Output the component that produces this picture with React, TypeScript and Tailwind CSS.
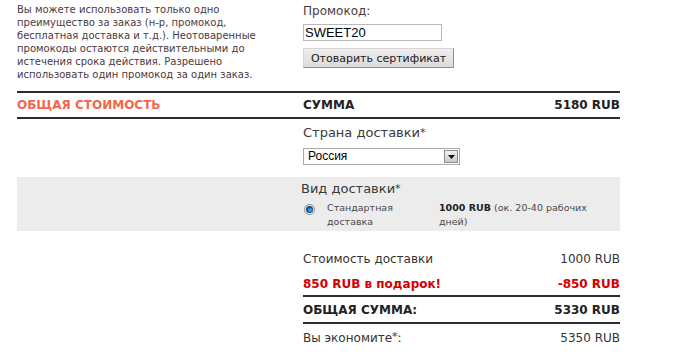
import React from "react";

const VERDANA = "font-['DejaVu_Sans',Verdana,sans-serif]";
const ARIAL = "font-['Liberation_Sans',Arial,sans-serif]";

function PromoBlock() {
  return (
    <div className="flex h-[91px]">
      <p className={`w-[286px] pt-[3px] pr-[30px] text-[10px] leading-[13px] text-[#4b3a3e] ${VERDANA}`}>
        Вы можете использовать только одно преимущество за заказ (н-р, промокод, бесплатная доставка и т.д.). Неотоваренные промокоды остаются действительными до истечения срока действия. Разрешено использовать один промокод за один заказ.
      </p>
      <div className="flex flex-col">
        <label className={`mt-[4px] text-[12px] leading-[15px] text-[#4b3a3e] ${VERDANA}`}>Промокод:</label>
        <input
          defaultValue="SWEET20"
          className={`mt-[5px] h-[17px] w-[139px] border border-[#b9b9b9] bg-white px-[1px] text-[13px] leading-[15px] text-black outline-none ${ARIAL}`}
        />
        <button
          className={`mt-[7px] h-[20px] w-[151px] border border-[#d6d4d4] border-b-[#8e8e8e] border-r-[#8e8e8e] bg-gradient-to-b from-[#efeded] to-[#dcdada] pt-[1px] text-[11px] leading-[16px] text-[#1a1a1a] ${VERDANA}`}
        >
          Отоварить сертификат
        </button>
      </div>
    </div>
  );
}

function SubtotalRow() {
  return (
    <div className={`flex h-[28px] items-center border-y-2 border-[#2c2c2c] text-[12px] font-bold ${VERDANA}`}>
      <span className="w-[286px] text-[#f2674e]">ОБЩАЯ СТОИМОСТЬ</span>
      <span className="flex-1 text-[#222]">СУММА</span>
      <span className="text-[#222]">5180 RUB</span>
    </div>
  );
}

function CountryBlock() {
  return (
    <div className="flex h-[58px]">
      <div className="w-[286px]" />
      <div className="flex flex-col">
        <span className={`mt-[6px] text-[13px] leading-[16px] text-[#3a3a3a] ${VERDANA}`}>
          Страна доставки<span className="text-[11px] align-top">*</span>
        </span>
        <div className="mt-[7px] flex h-[17px] w-[157px] items-center border border-[#a9a9a9] bg-white">
          <span className={`flex-1 pl-[4px] text-[12px] leading-[15px] text-black ${ARIAL}`}>Россия</span>
          <span className="mr-[1px] flex h-[13px] w-[14px] items-center justify-center border border-[#8c8c8c] bg-gradient-to-b from-[#f2f2f2] to-[#c9c9c9]">
            <svg width="7" height="4" viewBox="0 0 7 4">
              <path d="M0 0h7L3.5 4z" fill="#111" />
            </svg>
          </span>
        </div>
      </div>
    </div>
  );
}

function DeliveryBlock() {
  return (
    <div className={`flex h-[54px] bg-[#ececec] ${VERDANA}`}>
      <div className="w-[284px]" />
      <div className="flex flex-col">
        <span className="mt-[4px] text-[13px] leading-[16px] text-[#3a3a3a]">
          Вид доставки<span className="text-[11px] align-top">*</span>
        </span>
        <div className="mt-[4px] flex text-[9.5px] leading-[14px] text-[#4a4a4a]">
          <div className="ml-[3px] mt-[3px] flex h-[11px] w-[11px] items-center justify-center rounded-full border border-[#8a8a8a] bg-gradient-to-b from-[#d8d8d8] to-[#ffffff]">
            <div className="flex h-[7px] w-[7px] items-center justify-center rounded-full bg-[#0d4f8a]">
              <div className="h-[4px] w-[4px] rounded-full bg-[#3c9be0]" />
            </div>
          </div>
          <span className="ml-[12px] w-[112px]">Стандартная доставка</span>
          <span className="w-[170px]">
            <b className="text-[#222]">1000 RUB</b> (ок. 20-40 рабочих дней)
          </span>
        </div>
      </div>
    </div>
  );
}

function TotalsBlock() {
  return (
    <div className={`flex ${VERDANA}`}>
      <div className="w-[286px]" />
      <div className="flex flex-1 flex-col text-[12px] text-[#333]">
        <div className="mt-[18px] flex h-[20px] items-center justify-between">
          <span>Стоимость доставки</span>
          <span>1000 RUB</span>
        </div>
        <div className="mt-[7px] flex h-[16px] items-center justify-between font-bold text-[#d40000]">
          <span>850 RUB в подарок!</span>
          <span>-850 RUB</span>
        </div>
        <div className="mt-[3px] flex h-[29px] items-center justify-between border-y-2 border-[#2c2c2c] font-bold text-[#222]">
          <span>ОБЩАЯ СУММА:</span>
          <span>5330 RUB</span>
        </div>
        <div className="flex h-[28px] items-center justify-between">
          <span>
            Вы экономите<span className="text-[11px] align-top">*</span>:
          </span>
          <span>5350 RUB</span>
        </div>
      </div>
    </div>
  );
}

export default function App() {
  return (
    <div className="h-[354px] w-[687px] overflow-hidden bg-white">
      <div className="ml-[17px] w-[603px]">
        <PromoBlock />
        <SubtotalRow />
        <CountryBlock />
        <DeliveryBlock />
        <TotalsBlock />
      </div>
    </div>
  );
}
